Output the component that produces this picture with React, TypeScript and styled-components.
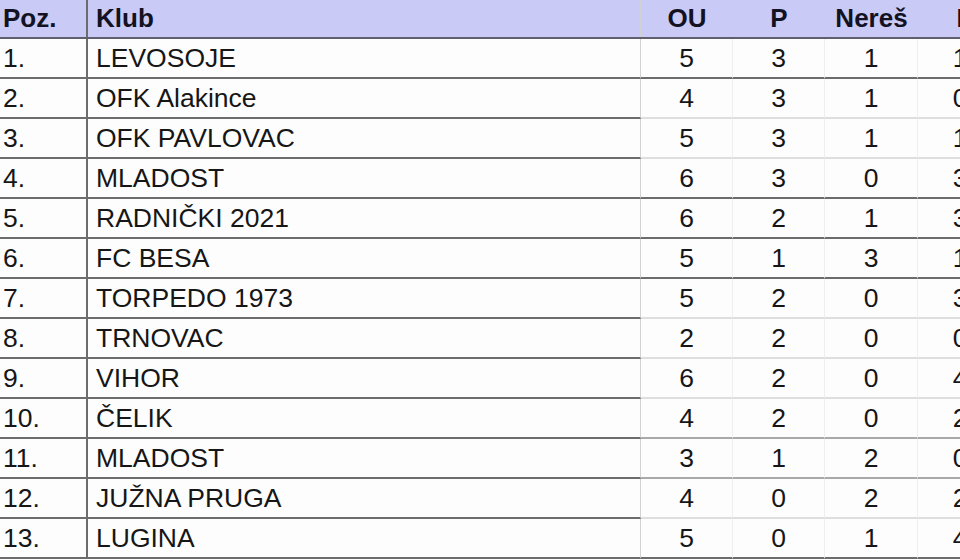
import styled, { createGlobalStyle } from "styled-components";

const GlobalStyle = createGlobalStyle`
  html, body {
    margin: 0;
    padding: 0;
    background: #fdfdfd;
    overflow: hidden;
  }
  body {
    font-family: "Liberation Sans", Arial, sans-serif;
    color: #161616;
  }
`;

type Line = "dark" | "mid" | "light";

const lineColors: Record<Line, string> = {
  dark: "#6c6c6c",
  mid: "#a9a9a9",
  light: "#dedede",
};

const COLS = "88px 553px 92px 92px 93px 84px";

const Sheet = styled.div`
  width: 1002px;
  height: 560px;
  overflow: hidden;
`;

const HeaderRow = styled.div`
  display: grid;
  grid-template-columns: ${COLS};
  height: 39px;
  box-sizing: border-box;
  background: #cacaf6;
  border-bottom: 2px solid #5f5f6e;
  font-size: 26px;
  font-weight: bold;
  color: #121222;
`;

const Row = styled.div`
  display: grid;
  grid-template-columns: ${COLS};
  height: 40px;
  font-size: 26.5px;
`;

const Cell = styled.div<{ $align?: "left" | "center"; $edge?: string; $bottom?: string }>`
  display: flex;
  align-items: center;
  justify-content: ${({ $align }) => ($align === "center" ? "center" : "flex-start")};
  box-sizing: border-box;
  padding: 0 ${({ $align }) => ($align === "center" ? "0" : "8px")};
  border-right: ${({ $edge }) => $edge || "none"};
  border-bottom: ${({ $bottom }) => ($bottom ? `2px solid ${$bottom}` : "none")};
  white-space: nowrap;
`;

const PozCell = styled(Cell)`
  padding-left: 3px;
`;

const headers = ["Poz.", "Klub", "OU", "P", "Nereš", "I"];

const rows: { club: string; stats: number[]; line: Line }[] = [
  { club: "LEVOSOJE", stats: [5, 3, 1, 1], line: "dark" },
  { club: "OFK Alakince", stats: [4, 3, 1, 0], line: "light" },
  { club: "OFK PAVLOVAC", stats: [5, 3, 1, 1], line: "light" },
  { club: "MLADOST", stats: [6, 3, 0, 3], line: "dark" },
  { club: "RADNIČKI 2021", stats: [6, 2, 1, 3], line: "dark" },
  { club: "FC BESA", stats: [5, 1, 3, 1], line: "dark" },
  { club: "TORPEDO 1973", stats: [5, 2, 0, 3], line: "light" },
  { club: "TRNOVAC", stats: [2, 2, 0, 0], line: "light" },
  { club: "VIHOR", stats: [6, 2, 0, 4], line: "light" },
  { club: "ČELIK", stats: [4, 2, 0, 2], line: "mid" },
  { club: "MLADOST", stats: [3, 1, 2, 0], line: "mid" },
  { club: "JUŽNA PRUGA", stats: [4, 0, 2, 2], line: "light" },
  { club: "LUGINA", stats: [5, 0, 1, 4], line: "dark" },
];

const DARK = lineColors.dark;
const pozEdge = `2px solid ${DARK}`;
const klubEdge = "1px solid #d2d2d2";
const statEdge = "1px solid #efefef";

export default function App() {
  return (
    <>
      <GlobalStyle />
      <Sheet>
        <HeaderRow>
          {headers.map((h, i) => (
            i === 0 ? (
              <PozCell key={h} $edge={pozEdge}>{h}</PozCell>
            ) : (
              <Cell
                key={h}
                $align={i > 1 ? "center" : "left"}
                $edge={i === 1 ? klubEdge : undefined}
              >
                {h}
              </Cell>
            )
          ))}
        </HeaderRow>
        {rows.map((r, idx) => (
          <Row key={idx}>
            <PozCell $edge={pozEdge} $bottom={DARK}>{idx + 1}.</PozCell>
            <Cell $edge={klubEdge} $bottom={DARK}>{r.club}</Cell>
            {r.stats.map((s, j) => (
              <Cell
                key={j}
                $align="center"
                $edge={j < 3 ? statEdge : undefined}
                $bottom={lineColors[r.line]}
              >
                {s}
              </Cell>
            ))}
          </Row>
        ))}
      </Sheet>
    </>
  );
}
